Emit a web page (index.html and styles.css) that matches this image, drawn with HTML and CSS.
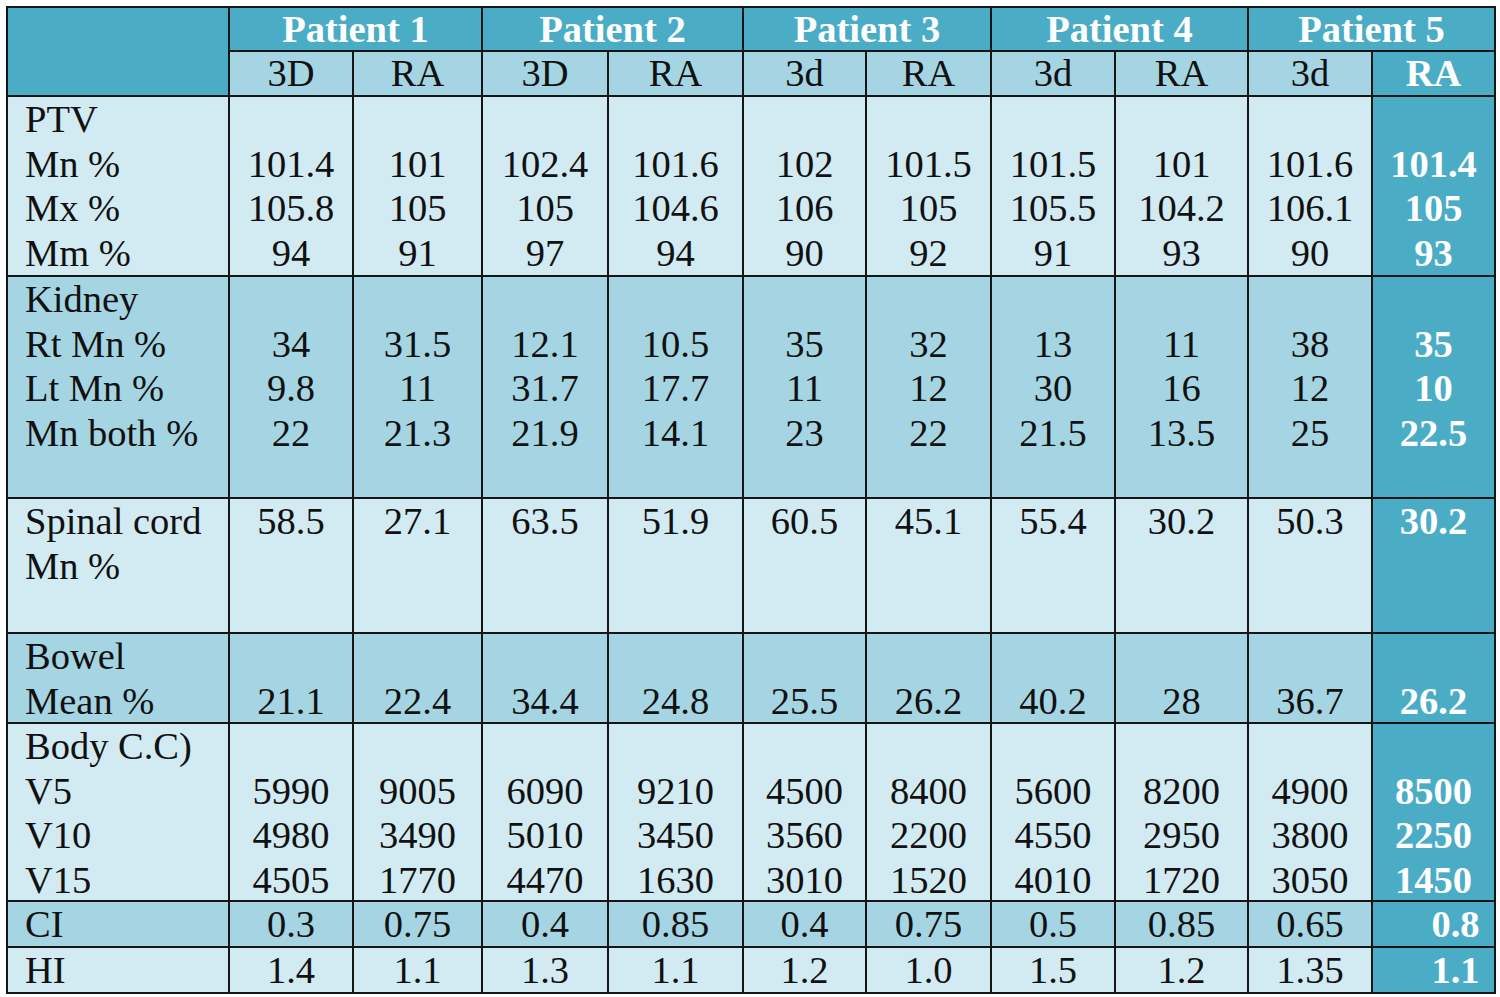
FILE: index.html
```html
<!DOCTYPE html>
<html lang="en">
<head>
<meta charset="utf-8">
<title>Dose comparison</title>
<link rel="stylesheet" href="styles.css">
</head>
<body>
<div class="grid" role="table">
  <div class="cell dark corner"></div>
  <div class="cell dark ph">Patient 1</div>
  <div class="cell dark ph">Patient 2</div>
  <div class="cell dark ph">Patient 3</div>
  <div class="cell dark ph">Patient 4</div>
  <div class="cell dark ph">Patient 5</div>

  <div class="cell mid sh">3D</div>
  <div class="cell mid sh">RA</div>
  <div class="cell mid sh">3D</div>
  <div class="cell mid sh">RA</div>
  <div class="cell mid sh">3d</div>
  <div class="cell mid sh">RA</div>
  <div class="cell mid sh">3d</div>
  <div class="cell mid sh">RA</div>
  <div class="cell mid sh">3d</div>
  <div class="cell dark sh hl">RA</div>

  <div class="cell light lbl">PTV<br>Mn %<br>Mx %<br>Mm %</div>
  <div class="cell light val"><br>101.4<br>105.8<br>94</div>
  <div class="cell light val"><br>101<br>105<br>91</div>
  <div class="cell light val"><br>102.4<br>105<br>97</div>
  <div class="cell light val"><br>101.6<br>104.6<br>94</div>
  <div class="cell light val"><br>102<br>106<br>90</div>
  <div class="cell light val"><br>101.5<br>105<br>92</div>
  <div class="cell light val"><br>101.5<br>105.5<br>91</div>
  <div class="cell light val"><br>101<br>104.2<br>93</div>
  <div class="cell light val"><br>101.6<br>106.1<br>90</div>
  <div class="cell dark val hl"><br>101.4<br>105<br>93</div>

  <div class="cell mid lbl">Kidney<br>Rt Mn %<br>Lt Mn %<br>Mn both %</div>
  <div class="cell mid val"><br>34<br>9.8<br>22</div>
  <div class="cell mid val"><br>31.5<br>11<br>21.3</div>
  <div class="cell mid val"><br>12.1<br>31.7<br>21.9</div>
  <div class="cell mid val"><br>10.5<br>17.7<br>14.1</div>
  <div class="cell mid val"><br>35<br>11<br>23</div>
  <div class="cell mid val"><br>32<br>12<br>22</div>
  <div class="cell mid val"><br>13<br>30<br>21.5</div>
  <div class="cell mid val"><br>11<br>16<br>13.5</div>
  <div class="cell mid val"><br>38<br>12<br>25</div>
  <div class="cell dark val hl"><br>35<br>10<br>22.5</div>

  <div class="cell light lbl">Spinal cord<br>Mn %</div>
  <div class="cell light val">58.5</div>
  <div class="cell light val">27.1</div>
  <div class="cell light val">63.5</div>
  <div class="cell light val">51.9</div>
  <div class="cell light val">60.5</div>
  <div class="cell light val">45.1</div>
  <div class="cell light val">55.4</div>
  <div class="cell light val">30.2</div>
  <div class="cell light val">50.3</div>
  <div class="cell dark val hl">30.2</div>

  <div class="cell mid lbl">Bowel<br>Mean %</div>
  <div class="cell mid val"><br>21.1</div>
  <div class="cell mid val"><br>22.4</div>
  <div class="cell mid val"><br>34.4</div>
  <div class="cell mid val"><br>24.8</div>
  <div class="cell mid val"><br>25.5</div>
  <div class="cell mid val"><br>26.2</div>
  <div class="cell mid val"><br>40.2</div>
  <div class="cell mid val"><br>28</div>
  <div class="cell mid val"><br>36.7</div>
  <div class="cell dark val hl"><br>26.2</div>

  <div class="cell light lbl">Body C.C)<br>V5<br>V10<br>V15</div>
  <div class="cell light val"><br>5990<br>4980<br>4505</div>
  <div class="cell light val"><br>9005<br>3490<br>1770</div>
  <div class="cell light val"><br>6090<br>5010<br>4470</div>
  <div class="cell light val"><br>9210<br>3450<br>1630</div>
  <div class="cell light val"><br>4500<br>3560<br>3010</div>
  <div class="cell light val"><br>8400<br>2200<br>1520</div>
  <div class="cell light val"><br>5600<br>4550<br>4010</div>
  <div class="cell light val"><br>8200<br>2950<br>1720</div>
  <div class="cell light val"><br>4900<br>3800<br>3050</div>
  <div class="cell dark val hl"><br>8500<br>2250<br>1450</div>

  <div class="cell mid lbl one">CI</div>
  <div class="cell mid val one">0.3</div>
  <div class="cell mid val one">0.75</div>
  <div class="cell mid val one">0.4</div>
  <div class="cell mid val one">0.85</div>
  <div class="cell mid val one">0.4</div>
  <div class="cell mid val one">0.75</div>
  <div class="cell mid val one">0.5</div>
  <div class="cell mid val one">0.85</div>
  <div class="cell mid val one">0.65</div>
  <div class="cell dark val hl one shift">0.8</div>

  <div class="cell light lbl one">HI</div>
  <div class="cell light val one">1.4</div>
  <div class="cell light val one">1.1</div>
  <div class="cell light val one">1.3</div>
  <div class="cell light val one">1.1</div>
  <div class="cell light val one">1.2</div>
  <div class="cell light val one">1.0</div>
  <div class="cell light val one">1.5</div>
  <div class="cell light val one">1.2</div>
  <div class="cell light val one">1.35</div>
  <div class="cell dark val hl one shift">1.1</div>
</div>
</body>
</html>
```

FILE: styles.css
```css
html, body {
  margin: 0;
  padding: 0;
  background: #ffffff;
}

body {
  font-family: "Liberation Serif", "Times New Roman", serif;
  font-size: 38.5px;
  line-height: 44.5px;
  color: #111111;
}

.grid {
  display: grid;
  grid-template-columns: 222px 124px 129px 126px 135px 123px 125px 124px 133px 124px 123px;
  grid-template-rows: 44px 45px 180px 222px 135px 90px 178px 46px 46px;
  width: 1490px;
  box-sizing: border-box;
  margin: 6px 0 0 6px;
  border-left: 2px solid #161616;
  border-top: 2px solid #161616;
}

.cell {
  box-sizing: border-box;
  border-right: 2px solid #161616;
  border-bottom: 2px solid #161616;
  padding: 0;
  white-space: nowrap;
  overflow: hidden;
}

.dark { background: #4bacc6; }
.mid { background: #a5d5e2; }
.light { background: #d2eaf1; }

.corner {
  grid-row: span 2;
}

.ph {
  grid-column: span 2;
  display: flex;
  align-items: center;
  justify-content: center;
  font-weight: bold;
  color: #ffffff;
}

.sh {
  display: flex;
  align-items: center;
  justify-content: center;
}

.lbl {
  text-align: left;
  padding-left: 17px;
}

.val {
  text-align: center;
}

.one {
  display: flex;
  align-items: center;
}

.val.one {
  justify-content: center;
}

.hl {
  color: #ffffff;
  font-weight: bold;
}

.shift {
  padding-left: 44px;
}
```
